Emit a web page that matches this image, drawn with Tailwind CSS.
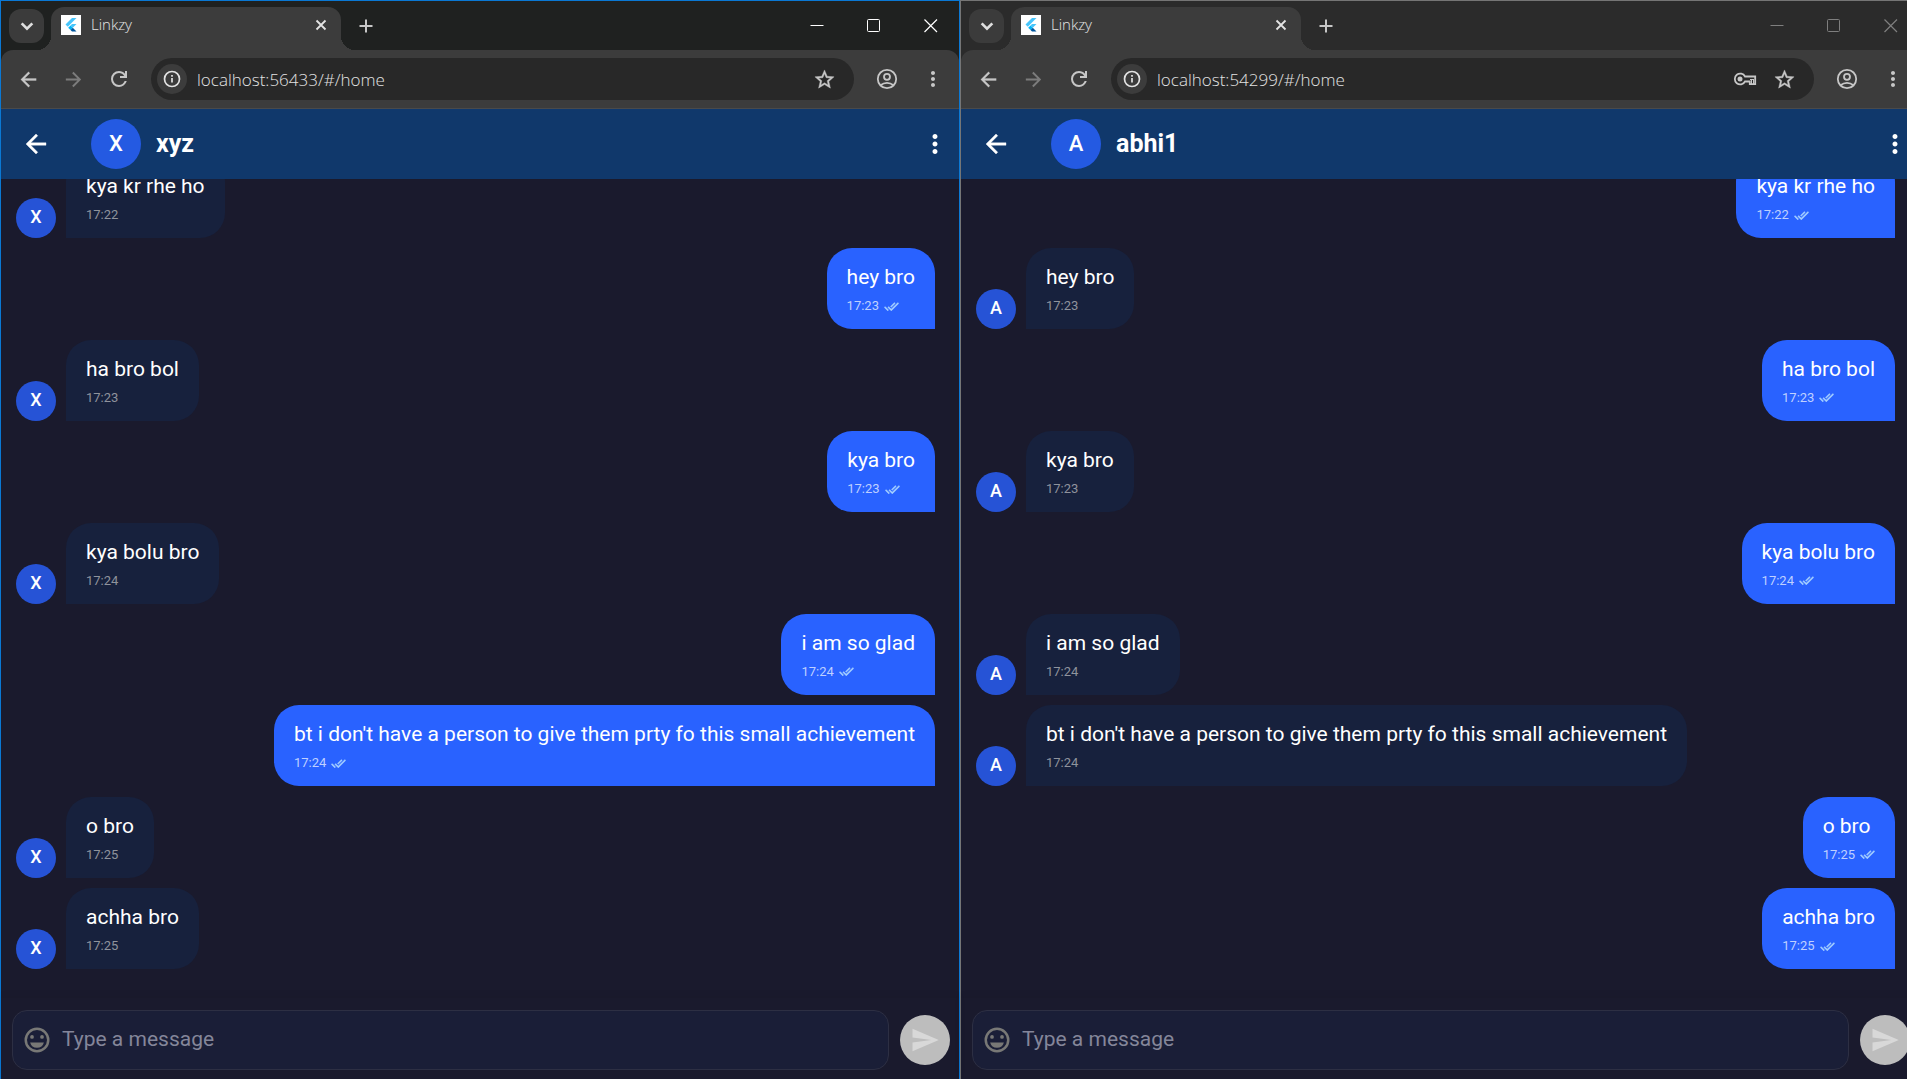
<!DOCTYPE html>
<html lang="en">
<head>
<meta charset="utf-8">
<title>Linkzy</title>
<script src="https://cdn.jsdelivr.net/npm/@tailwindcss/browser@4"></script>
</head>
<body class="h-screen overflow-hidden bg-[#1a1a2d] font-['Roboto',sans-serif] text-white">

<svg class="hidden" aria-hidden="true">
  <symbol id="chevron" viewBox="0 0 12 12"><path d="M2 4l4 4 4-4" fill="none" stroke="currentColor" stroke-width="2"/></symbol>
  <symbol id="flutter" viewBox="0 0 20 20"><path fill="#fff" d="M0 0h20v20H0z"/><path fill="#47c5fb" d="M11 3h4.500L6.800 11.800 4.500 9.500z"/><path fill="#47c5fb" d="M11 9h4.500l-3.700 3.700-2.300-2.300z"/><path fill="#00b5f8" d="M9.500 10.400l2.300 2.300-2.300 2.300-2.300-2.300z"/><path fill="#00569e" d="M9.500 15l2.300-2.300 3.700 3.800H11z"/></symbol>
  <symbol id="cross" viewBox="0 0 12 12"><path d="M1.500 1.500l9 9M10.500 1.500l-9 9" stroke="currentColor" stroke-width="1.800"/></symbol>
  <symbol id="plus" viewBox="0 0 14 14"><path d="M7 .5v13M.5 7h13" stroke="currentColor" stroke-width="2"/></symbol>
  <symbol id="minimize" viewBox="0 0 14 14"><path d="M.5 6.500h13" stroke="currentColor"/></symbol>
  <symbol id="maximize" viewBox="0 0 14 14"><rect x=".5" y=".5" width="12" height="12" rx="1" fill="none" stroke="currentColor"/></symbol>
  <symbol id="close" viewBox="0 0 14 14"><path d="M.5 .5l12.500 12.500M13 .5L.5 13" stroke="currentColor" stroke-width="1.200"/></symbol>
  <symbol id="back" viewBox="0 0 24 24"><path fill="currentColor" stroke="currentColor" stroke-width=".3" d="M20 11H7.830l5.590-5.590L12 4l-8 8 8 8 1.410-1.410L7.830 13H20v-2z"/></symbol>
  <symbol id="forward" viewBox="0 0 24 24"><path fill="currentColor" d="M12 4l-1.410 1.410L16.170 11H4v2h12.170l-5.580 5.590L12 20l8-8z"/></symbol>
  <symbol id="reload" viewBox="0 0 24 24"><path fill="currentColor" d="M12 20q-3.350 0-5.675-2.325T4 12t2.325-5.675T12 4q1.725 0 3.300.7125T18 6.750V4h2v7h-7V9h4.200q-.8-1.400-2.1875-2.200T12 6Q9.500 6 7.750 7.750T6 12t1.750 4.250T12 18q1.925 0 3.475-1.100T17.650 14h2.100q-.7 2.650-2.850 4.325T12 20"/></symbol>
  <symbol id="info" viewBox="0 0 18 18"><circle cx="9" cy="9" r="7.500" fill="none" stroke="currentColor" stroke-width="1.700"/><path d="M9 8v4.500M9 5v1.800" stroke="currentColor" stroke-width="1.700"/></symbol>
  <symbol id="star" viewBox="0 0 24 24"><path fill="currentColor" stroke="currentColor" stroke-width=".4" d="M22 9.240l-7.190-.62L12 2 9.190 8.630 2 9.240l5.460 4.730L5.820 21 12 17.270 18.180 21l-1.630-7.030L22 9.240zM12 15.400l-3.760 2.270 1-4.280-3.320-2.880 4.380-.38L12 6.100l1.710 4.040 4.380.38-3.320 2.880 1 4.280L12 15.400z"/></symbol>
  <symbol id="key" viewBox="0 0 24 14"><path fill="none" stroke="currentColor" stroke-width="1.800" d="M12 4.500A5.400 5.400 0 1 0 12 9.500h4.800V12.200h5.400V4.500z"/><circle cx="7" cy="7" r="2.500" fill="currentColor"/><path d="M18.500 7.500v4.500M20.500 7.500v4.500M17 7.500h4" stroke="currentColor"/></symbol>
  <symbol id="account" viewBox="0 0 24 24"><g fill="none" stroke="currentColor" stroke-width="1.800"><circle cx="12" cy="12" r="9.200"/><circle cx="12" cy="9.800" r="3"/><path d="M5.500 18.200q3-2.400 6.500-2.400t6.500 2.400"/></g></symbol>
  <symbol id="dots" viewBox="0 0 24 24"><path fill="currentColor" d="M12 8c1.100 0 2-.9 2-2s-.9-2-2-2-2 .9-2 2 .9 2 2 2zm0 2c-1.100 0-2 .9-2 2s.9 2 2 2 2-.9 2-2-.9-2-2-2zm0 6c-1.100 0-2 .9-2 2s.9 2 2 2 2-.9 2-2-.9-2-2-2z"/></symbol>
  <symbol id="read" viewBox="0 0 24 24"><path fill="currentColor" stroke="currentColor" stroke-width=".6" d="M18 7l-1.410-1.410-6.340 6.340 1.410 1.410L18 7zm4.240-1.410L11.660 16.170 7.480 12l-1.410 1.410L11.660 19l12-12-1.420-1.410zM.41 13.410L6 19l1.410-1.410L1.830 12 .41 13.410z"/></symbol>
  <symbol id="smile" viewBox="0 0 24 24"><circle cx="12" cy="12" r="9" fill="none" stroke="currentColor" stroke-width="2"/><circle cx="8" cy="9.500" r="1.500" fill="currentColor"/><circle cx="16" cy="9.500" r="1.500" fill="currentColor"/><path fill="currentColor" d="M6.500 14h11a5.700 5.700 0 0 1-11 0z"/></symbol>
  <symbol id="send" viewBox="0 0 24 24"><path fill="currentColor" d="M2.010 21L23 12 2.010 3 2 10l15 2-15 2z"/></symbol>
</svg>

<div class="grid h-full w-[calc(100%+13px)] grid-cols-2">

  <!-- First window -->
  <section class="flex min-h-0 min-w-0 flex-col border-x border-t border-[#0a78d4]">
    <div class="flex h-[49px] shrink-0 items-center bg-[#1f2120] font-['Open_Sans',sans-serif]">
      <button aria-label="Search tabs" class="ml-2 flex h-[34px] w-[35px] items-center justify-center rounded-xl bg-[#3b3b3b] text-[#dedede]"><svg class="size-4"><use href="#chevron"/></svg></button>
      <div class="relative ml-[7px] flex h-[43px] w-[290px] items-center self-end rounded-t-[13px] bg-[#3c3c3c] pb-2 pl-2.5 pr-3">
        <span class="absolute -left-3.5 bottom-0 size-3.5 bg-[radial-gradient(circle_at_0_0,transparent_14px,#3c3c3c_14px)]"></span>
        <span class="absolute -right-3.5 bottom-0 size-3.5 bg-[radial-gradient(circle_at_100%_0,transparent_14px,#3c3c3c_14px)]"></span>
        <svg class="size-5"><use href="#flutter"/></svg>
        <span class="ml-2.5 flex-1 text-[15px] font-light text-[#e4e4e4]">Linkzy</span>
        <button aria-label="Close tab" class="flex size-4 items-center justify-center text-[#e3e3e3]"><svg class="size-3"><use href="#cross"/></svg></button>
      </div>
      <button aria-label="New tab" class="ml-[17px] flex size-4 items-center justify-center text-[#c7c7c7]"><svg class="size-3.5"><use href="#plus"/></svg></button>
      <div class="ml-auto flex text-white">
        <button aria-label="Minimize" class="flex h-8 w-[57px] items-center justify-center"><svg class="size-3.5"><use href="#minimize"/></svg></button>
        <button aria-label="Maximize" class="flex h-8 w-[57px] items-center justify-center"><svg class="size-3.5"><use href="#maximize"/></svg></button>
        <button aria-label="Close" class="flex h-8 w-[57px] items-center justify-center"><svg class="size-3.5"><use href="#close"/></svg></button>
      </div>
    </div>
    <div class="shrink-0 bg-[#1f2120]">
      <div class="flex h-[59px] items-center rounded-t-xl border-b border-[#4a4a4a] bg-[#3c3c3c] pl-4 text-[#c7c7c7]">
        <button aria-label="Back" class="size-6"><svg class="size-[23px]"><use href="#back"/></svg></button>
        <button aria-label="Forward" class="ml-[21px] size-6 text-[#7c7c7c]"><svg class="size-[23px]"><use href="#forward"/></svg></button>
        <button aria-label="Reload" class="ml-[21px] size-6"><svg class="size-6"><use href="#reload"/></svg></button>
        <div class="ml-5 flex h-[42px] flex-1 items-center rounded-full bg-[#282828] pl-1.5 pr-[18px]">
          <button aria-label="Site information" class="flex size-[30px] items-center justify-center rounded-full bg-[#3c3c3c] text-[#e3e3e3]"><svg class="size-[18px]"><use href="#info"/></svg></button>
          <input aria-label="Address" value="localhost:56433/#/home" class="ml-2.5 min-w-0 flex-1 bg-transparent pt-0.5 font-['Open_Sans',sans-serif] text-[17px] font-light text-[#e3e3e3] outline-none">
          <button aria-label="Bookmark" class="size-[23px]"><svg class="size-[23px]"><use href="#star"/></svg></button>
        </div>
        <button aria-label="Profile" class="ml-[21px] size-6"><svg class="size-6"><use href="#account"/></svg></button>
        <button aria-label="Chrome menu" class="ml-[22px] mr-3.5 size-6"><svg class="size-6"><use href="#dots"/></svg></button>
      </div>
    </div>

    <header class="z-10 flex h-[70px] shrink-0 items-center bg-[#10386b] pl-5 pr-[9px]">
      <button aria-label="Back to chats" class="size-[30px]"><svg class="size-[30px]"><use href="#back"/></svg></button>
      <div class="ml-10 flex size-[50px] items-center justify-center rounded-full bg-[#245ae2] pb-0.5 text-[22px] font-medium">X</div>
      <h1 class="ml-[15px] flex-1 text-[25px] font-bold">xyz</h1>
      <button aria-label="More options" class="size-[30px]"><svg class="size-[30px]"><use href="#dots"/></svg></button>
    </header>

    <main class="flex min-h-0 flex-1 flex-col overflow-hidden pb-[29px] pl-[15px] pr-6 text-[21px]/7">
      <ul class="-mt-[22px] flex min-h-0 flex-1 flex-col justify-between">
        <li class="flex items-end gap-2.5"><span class="flex size-10 items-center justify-center rounded-full bg-[#2653d6] pb-0.5 text-lg font-medium">X</span><div class="rounded-[25px] rounded-bl-none bg-[#17213d] px-5 py-[15px]"><p>kya kr rhe ho</p><p class="mt-[7px] text-[13px]/4 text-[#8f939c]">17:22</p></div></li>
        <li class="flex justify-end"><div class="rounded-[25px] rounded-br-none bg-[#2962ff] px-5 py-[15px]"><p>hey bro</p><p class="mt-[7px] flex items-center gap-[5px] text-[13px]/4 text-[#bfd0ff]">17:23<svg class="size-[15px] text-[#a5d0ff]"><use href="#read"/></svg></p></div></li>
        <li class="flex items-end gap-2.5"><span class="flex size-10 items-center justify-center rounded-full bg-[#2653d6] pb-0.5 text-lg font-medium">X</span><div class="rounded-[25px] rounded-bl-none bg-[#17213d] px-5 py-[15px]"><p>ha bro bol</p><p class="mt-[7px] text-[13px]/4 text-[#8f939c]">17:23</p></div></li>
        <li class="flex justify-end"><div class="rounded-[25px] rounded-br-none bg-[#2962ff] px-5 py-[15px]"><p>kya bro</p><p class="mt-[7px] flex items-center gap-[5px] text-[13px]/4 text-[#bfd0ff]">17:23<svg class="size-[15px] text-[#a5d0ff]"><use href="#read"/></svg></p></div></li>
        <li class="flex items-end gap-2.5"><span class="flex size-10 items-center justify-center rounded-full bg-[#2653d6] pb-0.5 text-lg font-medium">X</span><div class="rounded-[25px] rounded-bl-none bg-[#17213d] px-5 py-[15px]"><p>kya bolu bro</p><p class="mt-[7px] text-[13px]/4 text-[#8f939c]">17:24</p></div></li>
        <li class="flex justify-end"><div class="rounded-[25px] rounded-br-none bg-[#2962ff] px-5 py-[15px]"><p>i am so glad</p><p class="mt-[7px] flex items-center gap-[5px] text-[13px]/4 text-[#bfd0ff]">17:24<svg class="size-[15px] text-[#a5d0ff]"><use href="#read"/></svg></p></div></li>
        <li class="flex justify-end"><div class="rounded-[25px] rounded-br-none bg-[#2962ff] px-5 py-[15px]"><p>bt i don't have a person to give them prty fo this small achievement</p><p class="mt-[7px] flex items-center gap-[5px] text-[13px]/4 text-[#bfd0ff]">17:24<svg class="size-[15px] text-[#a5d0ff]"><use href="#read"/></svg></p></div></li>
        <li class="flex items-end gap-2.5"><span class="flex size-10 items-center justify-center rounded-full bg-[#2653d6] pb-0.5 text-lg font-medium">X</span><div class="rounded-[25px] rounded-bl-none bg-[#17213d] px-5 py-[15px]"><p>o bro</p><p class="mt-[7px] text-[13px]/4 text-[#8f939c]">17:25</p></div></li>
        <li class="flex items-end gap-2.5"><span class="flex size-10 items-center justify-center rounded-full bg-[#2653d6] pb-0.5 text-lg font-medium">X</span><div class="rounded-[25px] rounded-bl-none bg-[#17213d] px-5 py-[15px]"><p>achha bro</p><p class="mt-[7px] text-[13px]/4 text-[#8f939c]">17:25</p></div></li>
      </ul>
    </main>

    <form class="flex shrink-0 items-center gap-[11px] pb-[9px] pl-[11px] pr-[9px] pt-3 shadow-[0_-2px_8px_#0000000d]">
      <div class="flex h-[60px] min-w-0 flex-1 items-center rounded-[15px] border border-[#2d2f43] bg-[#1a1e37] pl-[9px] pr-4">
        <button type="button" aria-label="Emoji" class="size-[30px] text-[#787876]"><svg class="size-[30px]"><use href="#smile"/></svg></button>
        <input aria-label="Message" placeholder="Type a message" class="ml-2.5 min-w-0 flex-1 bg-transparent text-[21px] outline-none placeholder:text-[#84869a]">
      </div>
      <button type="button" aria-label="Send" class="flex size-[50px] items-center justify-center rounded-full bg-[#bdbdbd] text-[#d8d8d8]"><svg class="size-[30px]"><use href="#send"/></svg></button>
    </form>
  </section>

  <!-- Second window -->
  <section class="flex min-h-0 min-w-0 flex-col border-x border-t border-[#757575]">
    <div class="flex h-[49px] shrink-0 items-center bg-[#2b2b2b] font-['Open_Sans',sans-serif]">
      <button aria-label="Search tabs" class="ml-2 flex h-[34px] w-[35px] items-center justify-center rounded-xl bg-[#3b3b3b] text-[#dedede]"><svg class="size-4"><use href="#chevron"/></svg></button>
      <div class="relative ml-[7px] flex h-[43px] w-[290px] items-center self-end rounded-t-[13px] bg-[#3c3c3c] pb-2 pl-2.5 pr-3">
        <span class="absolute -left-3.5 bottom-0 size-3.5 bg-[radial-gradient(circle_at_0_0,transparent_14px,#3c3c3c_14px)]"></span>
        <span class="absolute -right-3.5 bottom-0 size-3.5 bg-[radial-gradient(circle_at_100%_0,transparent_14px,#3c3c3c_14px)]"></span>
        <svg class="size-5"><use href="#flutter"/></svg>
        <span class="ml-2.5 flex-1 text-[15px] font-light text-[#e4e4e4]">Linkzy</span>
        <button aria-label="Close tab" class="flex size-4 items-center justify-center text-[#e3e3e3]"><svg class="size-3"><use href="#cross"/></svg></button>
      </div>
      <button aria-label="New tab" class="ml-[17px] flex size-4 items-center justify-center text-[#c7c7c7]"><svg class="size-3.5"><use href="#plus"/></svg></button>
      <div class="ml-auto flex text-[#7f7f7f]">
        <button aria-label="Minimize" class="flex h-8 w-[57px] items-center justify-center"><svg class="size-3.5"><use href="#minimize"/></svg></button>
        <button aria-label="Maximize" class="flex h-8 w-[57px] items-center justify-center"><svg class="size-3.5"><use href="#maximize"/></svg></button>
        <button aria-label="Close" class="flex h-8 w-[57px] items-center justify-center"><svg class="size-3.5"><use href="#close"/></svg></button>
      </div>
    </div>
    <div class="shrink-0 bg-[#2b2b2b]">
      <div class="flex h-[59px] items-center rounded-t-xl border-b border-[#4a4a4a] bg-[#3c3c3c] pl-4 text-[#c7c7c7]">
        <button aria-label="Back" class="size-6"><svg class="size-[23px]"><use href="#back"/></svg></button>
        <button aria-label="Forward" class="ml-[21px] size-6 text-[#7c7c7c]"><svg class="size-[23px]"><use href="#forward"/></svg></button>
        <button aria-label="Reload" class="ml-[21px] size-6"><svg class="size-6"><use href="#reload"/></svg></button>
        <div class="ml-5 flex h-[42px] flex-1 items-center rounded-full bg-[#282828] pl-1.5 pr-[18px]">
          <button aria-label="Site information" class="flex size-[30px] items-center justify-center rounded-full bg-[#3c3c3c] text-[#e3e3e3]"><svg class="size-[18px]"><use href="#info"/></svg></button>
          <input aria-label="Address" value="localhost:54299/#/home" class="ml-2.5 min-w-0 flex-1 bg-transparent pt-0.5 font-['Open_Sans',sans-serif] text-[17px] font-light text-[#e3e3e3] outline-none">
          <button aria-label="Passwords" class="mr-4 h-3.5 w-6"><svg class="h-3.5 w-6"><use href="#key"/></svg></button>
          <button aria-label="Bookmark" class="size-[23px]"><svg class="size-[23px]"><use href="#star"/></svg></button>
        </div>
        <button aria-label="Profile" class="ml-[21px] size-6"><svg class="size-6"><use href="#account"/></svg></button>
        <button aria-label="Chrome menu" class="ml-[22px] mr-3.5 size-6"><svg class="size-6"><use href="#dots"/></svg></button>
      </div>
    </div>

    <header class="z-10 flex h-[70px] shrink-0 items-center bg-[#10386b] pl-5 pr-[9px]">
      <button aria-label="Back to chats" class="size-[30px]"><svg class="size-[30px]"><use href="#back"/></svg></button>
      <div class="ml-10 flex size-[50px] items-center justify-center rounded-full bg-[#245ae2] pb-0.5 text-[22px] font-medium">A</div>
      <h1 class="ml-[15px] flex-1 text-[25px] font-bold">abhi1</h1>
      <button aria-label="More options" class="size-[30px]"><svg class="size-[30px]"><use href="#dots"/></svg></button>
    </header>

    <main class="flex min-h-0 flex-1 flex-col overflow-hidden pb-[29px] pl-[15px] pr-6 text-[21px]/7">
      <ul class="-mt-[22px] flex min-h-0 flex-1 flex-col justify-between">
        <li class="flex justify-end"><div class="rounded-[25px] rounded-br-none bg-[#2962ff] px-5 py-[15px]"><p>kya kr rhe ho</p><p class="mt-[7px] flex items-center gap-[5px] text-[13px]/4 text-[#bfd0ff]">17:22<svg class="size-[15px] text-[#a5d0ff]"><use href="#read"/></svg></p></div></li>
        <li class="flex items-end gap-2.5"><span class="flex size-10 items-center justify-center rounded-full bg-[#2653d6] pb-0.5 text-lg font-medium">A</span><div class="rounded-[25px] rounded-bl-none bg-[#17213d] px-5 py-[15px]"><p>hey bro</p><p class="mt-[7px] text-[13px]/4 text-[#8f939c]">17:23</p></div></li>
        <li class="flex justify-end"><div class="rounded-[25px] rounded-br-none bg-[#2962ff] px-5 py-[15px]"><p>ha bro bol</p><p class="mt-[7px] flex items-center gap-[5px] text-[13px]/4 text-[#bfd0ff]">17:23<svg class="size-[15px] text-[#a5d0ff]"><use href="#read"/></svg></p></div></li>
        <li class="flex items-end gap-2.5"><span class="flex size-10 items-center justify-center rounded-full bg-[#2653d6] pb-0.5 text-lg font-medium">A</span><div class="rounded-[25px] rounded-bl-none bg-[#17213d] px-5 py-[15px]"><p>kya bro</p><p class="mt-[7px] text-[13px]/4 text-[#8f939c]">17:23</p></div></li>
        <li class="flex justify-end"><div class="rounded-[25px] rounded-br-none bg-[#2962ff] px-5 py-[15px]"><p>kya bolu bro</p><p class="mt-[7px] flex items-center gap-[5px] text-[13px]/4 text-[#bfd0ff]">17:24<svg class="size-[15px] text-[#a5d0ff]"><use href="#read"/></svg></p></div></li>
        <li class="flex items-end gap-2.5"><span class="flex size-10 items-center justify-center rounded-full bg-[#2653d6] pb-0.5 text-lg font-medium">A</span><div class="rounded-[25px] rounded-bl-none bg-[#17213d] px-5 py-[15px]"><p>i am so glad</p><p class="mt-[7px] text-[13px]/4 text-[#8f939c]">17:24</p></div></li>
        <li class="flex items-end gap-2.5"><span class="flex size-10 items-center justify-center rounded-full bg-[#2653d6] pb-0.5 text-lg font-medium">A</span><div class="rounded-[25px] rounded-bl-none bg-[#17213d] px-5 py-[15px]"><p>bt i don't have a person to give them prty fo this small achievement</p><p class="mt-[7px] text-[13px]/4 text-[#8f939c]">17:24</p></div></li>
        <li class="flex justify-end"><div class="rounded-[25px] rounded-br-none bg-[#2962ff] px-5 py-[15px]"><p>o bro</p><p class="mt-[7px] flex items-center gap-[5px] text-[13px]/4 text-[#bfd0ff]">17:25<svg class="size-[15px] text-[#a5d0ff]"><use href="#read"/></svg></p></div></li>
        <li class="flex justify-end"><div class="rounded-[25px] rounded-br-none bg-[#2962ff] px-5 py-[15px]"><p>achha bro</p><p class="mt-[7px] flex items-center gap-[5px] text-[13px]/4 text-[#bfd0ff]">17:25<svg class="size-[15px] text-[#a5d0ff]"><use href="#read"/></svg></p></div></li>
      </ul>
    </main>

    <form class="flex shrink-0 items-center gap-[11px] pb-[9px] pl-[11px] pr-[9px] pt-3 shadow-[0_-2px_8px_#0000000d]">
      <div class="flex h-[60px] min-w-0 flex-1 items-center rounded-[15px] border border-[#2d2f43] bg-[#1a1e37] pl-[9px] pr-4">
        <button type="button" aria-label="Emoji" class="size-[30px] text-[#787876]"><svg class="size-[30px]"><use href="#smile"/></svg></button>
        <input aria-label="Message" placeholder="Type a message" class="ml-2.5 min-w-0 flex-1 bg-transparent text-[21px] outline-none placeholder:text-[#84869a]">
      </div>
      <button type="button" aria-label="Send" class="flex size-[50px] items-center justify-center rounded-full bg-[#bdbdbd] text-[#d8d8d8]"><svg class="size-[30px]"><use href="#send"/></svg></button>
    </form>
  </section>
</div>
</body>
</html>
